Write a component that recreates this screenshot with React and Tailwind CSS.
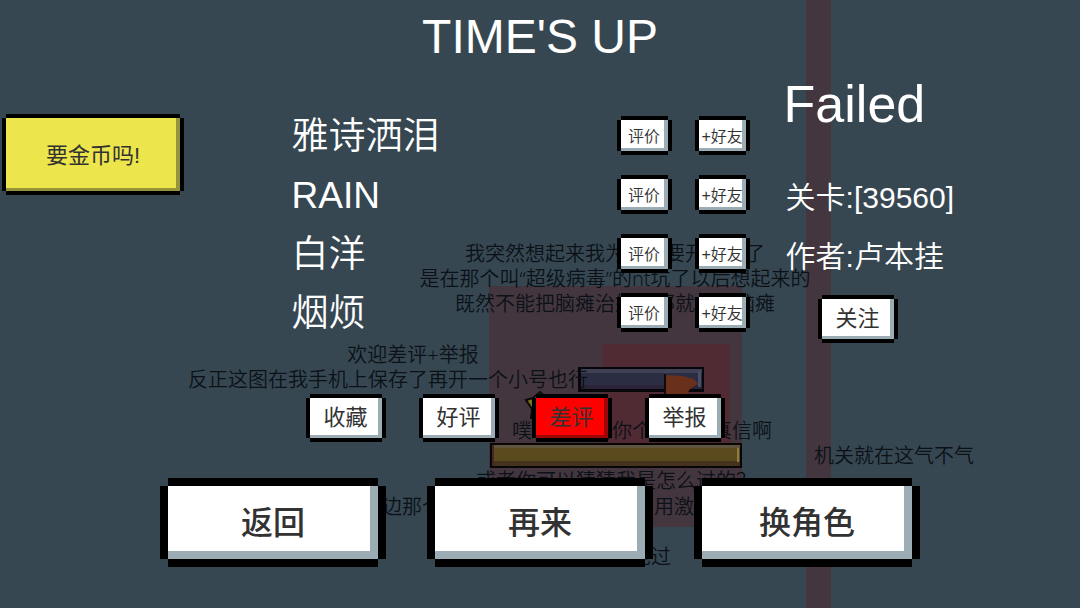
import { clsx } from 'clsx'

const PLAYERS = ['雅诗洒泪', 'RAIN', '白洋', '烟烦']

const VOTES = [
  { id: 'collect', label: '收藏' },
  { id: 'like', label: '好评' },
  { id: 'dislike', label: '差评', active: true },
  { id: 'report', label: '举报' },
]

const NAV = ['返回', '再来', '换角色']

// Text the level author left in the map. Coordinates are map positions.
const CAPTIONS = [
  { x: 'left-[615px]', y: 'top-[241px]', lines: ['我突然想起来我为什么要开小号了', '是在那个叫“超级病毒”的nt坑了以后想起来的', '既然不能把脑瘫治好，那就成为脑瘫'] },
  { x: 'left-[413px]', y: 'top-[342px]', lines: ['欢迎差评+举报'] },
  { x: 'left-[388px]', y: 'top-[367px]', lines: ['反正这图在我手机上保存了再开一个小号也行'] },
  { x: 'left-[642px]', y: 'top-[418px]', lines: ['噗哈哈哈哈你个傻子还真信啊'] },
  { x: 'left-[616px]', y: 'top-[468px]', lines: ['或者你可以猜猜我是怎么过的？'] },
  { x: 'left-[422px]', y: 'top-[494px]', lines: ['右边那个机关'] },
  { x: 'left-[684px]', y: 'top-[494px]', lines: ['用激光'] },
  { x: 'left-[641px]', y: 'top-[544px]', lines: ['没见过'] },
  { x: 'left-[894px]', y: 'top-[443px]', lines: ['机关就在这气不气'] },
]

export default function App() {
  return (
    <div className="relative min-h-screen overflow-hidden bg-[#364752] font-['Liberation_Sans','Noto_Sans_CJK_SC',sans-serif] text-white">
      <Scene />

      <div className="relative">
        <h1 className="text-center text-[48px] leading-[74px]">TIME'S UP</h1>

        <main className="-mt-0.5 grid grid-cols-[27%_45%_1fr]">
          <div className="pt-[46px] pl-[6px]">
            <PixelButton size="gold">要金币吗!</PixelButton>
          </div>

          <ul className="pt-[34px] pr-8">
            {PLAYERS.map((name) => (
              <li key={name} className="flex h-[59px] items-center">
                <span className="flex-1 pt-0.5 text-[37px] leading-none font-[350]">{name}</span>
                <div className="flex gap-[31px]">
                  <PixelButton size="sm">评价</PixelButton>
                  <PixelButton size="sm">+好友</PixelButton>
                </div>
              </li>
            ))}
          </ul>

          <LevelInfo />
        </main>

        <div className="flex justify-center gap-[41px] pt-14 pr-[50px]">
          {VOTES.map((v) => (
            <PixelButton key={v.id} size="md" active={v.active}>
              {v.label}
            </PixelButton>
          ))}
        </div>

        <nav className="flex justify-center gap-[57px] pt-12">
          {NAV.map((label) => (
            <PixelButton key={label} size="lg">
              {label}
            </PixelButton>
          ))}
        </nav>
      </div>
    </div>
  )
}

function LevelInfo() {
  return (
    <section className="pl-2">
      <h2 className="-ml-0.5 text-[52px] leading-[64px]">Failed</h2>
      <div className="pt-8 text-[30px] leading-[59px] font-[350]">
        <p>关卡:[39560]</p>
        <p>作者:卢本挂</p>
      </div>
      <div className="pt-[13px] pl-9">
        <PixelButton size="md">关注</PixelButton>
      </div>
    </section>
  )
}

const SIZES = {
  sm: 'h-[31px] w-[47px] pt-0.5 text-[16px] font-[350] shadow-[4px_0_#000,-4px_0_#000,0_4px_#000,0_-4px_#000] inset-shadow-[-4px_-3px_var(--bevel)]',
  md: 'h-10 w-[72px] text-[22px] shadow-[4px_0_#000,-4px_0_#000,0_4px_#000,0_-4px_#000] inset-shadow-[-4px_-3px_var(--bevel)]',
  gold: 'h-[73px] w-[174px] pt-0.5 text-[22px] shadow-[4px_0_#000,-4px_0_#000,0_4px_#000,0_-4px_#000] inset-shadow-[-4px_-3px_var(--bevel)]',
  lg: 'h-[73px] w-[210px] text-[32px] font-medium shadow-[8px_0_#000,-8px_0_#000,0_8px_#000,0_-8px_#000] inset-shadow-[-8px_-8px_var(--bevel)]',
}

// White plate with a bevel; the four hard shadows leave the corners notched.
function PixelButton({ size, active, children }) {
  return (
    <button
      type="button"
      className={clsx(
        'flex shrink-0 items-center justify-center leading-none whitespace-nowrap text-[#323232]',
        SIZES[size],
        size === 'gold' && 'bg-[#ece54b] [--bevel:#96943a]',
        size !== 'gold' && (active ? 'bg-[#ff0000] [--bevel:#9c0606]' : 'bg-white [--bevel:#9cacb5]'),
      )}
    >
      {children}
    </button>
  )
}

// The dimmed level behind the result screen
function Scene() {
  return (
    <div className="absolute inset-0" aria-hidden="true">
      <svg className="absolute top-0 left-0" width="1080" height="608" viewBox="0 0 1080 608">
        <rect x="489" y="286" width="253" height="241" fill="#44363f" />
        <rect x="603" y="344" width="127" height="110" fill="#512b33" />
        <rect x="806" width="25" height="608" fill="#43363f" />

        {/* blue platform */}
        <rect x="578" y="367" width="126" height="25" fill="#06060b" />
        <rect x="581" y="369" width="121" height="20" fill="#2b2e42" />
        <rect x="581" y="369" width="121" height="4" fill="#414156" />
        <rect x="581" y="385" width="121" height="4" fill="#2b2338" />
        <rect x="698" y="371" width="3" height="16" fill="#4a4c68" />

        {/* flag */}
        <rect x="664" y="374" width="2" height="24" fill="#120a08" />
        <path d="M666 375 L682 376 L694 379 L698 384 L690 389 L686 396 L666 396 Z" fill="#69301c" />

        {/* gold platform */}
        <rect x="490" y="443" width="252" height="25" fill="#0a0605" />
        <rect x="492" y="445" width="248" height="21" fill="#5a4a1d" />
        <rect x="492" y="445" width="248" height="3" fill="#5f543e" />
        <rect x="492" y="461" width="248" height="5" fill="#45331d" />
        <rect x="492" y="445" width="2" height="21" fill="#45282a" />
        <rect x="737" y="448" width="2" height="14" fill="#8d7c4a" />

        <path d="M526 400 L533 398 L540 392 L547 398 L547 418 L531 418 L532 409 Z" fill="#77711c" stroke="#0b0a06" strokeWidth="2" />
      </svg>
      {CAPTIONS.map((c) => (
        <p
          key={c.lines[0]}
          className={clsx(
            "absolute -translate-x-1/2 text-center font-['Noto_Sans','Noto_Sans_CJK_SC',sans-serif] text-[20px] leading-[25px] font-[350] whitespace-nowrap text-[#0b1117]",
            c.x,
            c.y,
          )}
        >
          {c.lines.map((line) => (
            <span key={line} className="block">
              {line}
            </span>
          ))}
        </p>
      ))}
    </div>
  )
}
